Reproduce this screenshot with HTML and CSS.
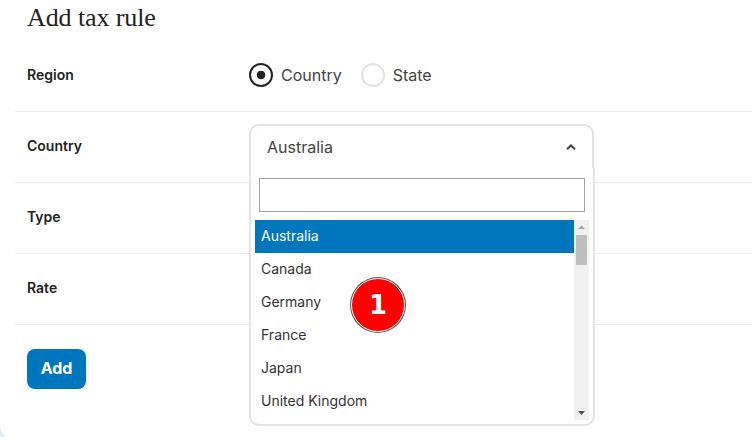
FILE: index.html
```html
<!DOCTYPE html>
<html lang="en">
<head>
<meta charset="utf-8">
<title>Add tax rule</title>
<link rel="stylesheet" href="styles.css">
</head>
<body>
<main class="card">
  <h1 class="title">Add tax rule</h1>
  <div class="row row-first">
    <div class="label">Region</div>
    <div class="control radios">
      <span class="radio-item"><span class="radio radio-on"></span>Country</span>
      <span class="radio-item"><span class="radio"></span>State</span>
    </div>
  </div>
  <div class="row">
    <div class="label">Country</div>
    <div class="control"></div>
  </div>
  <div class="row">
    <div class="label">Type</div>
    <div class="control"></div>
  </div>
  <div class="row">
    <div class="label">Rate</div>
    <div class="control"></div>
  </div>
  <div class="actions"><button class="add">Add</button></div>

  <div class="select">
    <div class="select-head">
      <span>Australia</span>
      <svg class="chev" width="10" height="6" viewBox="0 0 10 6"><path d="M1 5.2 L5 1.4 L9 5.2" fill="none" stroke="#444" stroke-width="2"/></svg>
    </div>
    <div class="dropdown">
      <div class="search"></div>
      <div class="list-wrap">
        <ul class="list">
          <li class="sel">Australia</li>
          <li>Canada</li>
          <li>Germany</li>
          <li>France</li>
          <li>Japan</li>
          <li>United Kingdom</li>
        </ul>
        <div class="scrollbar">
          <svg class="arrow" width="15" height="15" viewBox="0 0 15 15"><path d="M4 9 L7.5 5.5 L11 9 Z" fill="#a3a3a3"/></svg>
          <div class="thumb"></div>
          <div class="track"></div>
          <svg class="arrow" width="15" height="15" viewBox="0 0 15 15"><path d="M4 6 L11 6 L7.5 10 Z" fill="#505050"/></svg>
        </div>
      </div>
    </div>
  </div>
  <div class="badge">1</div>
</main>
</body>
</html>
```

FILE: styles.css
```css
* { box-sizing: border-box; }
html, body { margin: 0; padding: 0; }
body {
  width: 752px;
  height: 437px;
  overflow: hidden;
  background: #e4ecf4;
  font-family: "Inter", "Liberation Sans", sans-serif;
  color: #222;
}
.card {
  position: relative;
  height: 438px;
  background: #fff;
  border-bottom-left-radius: 12px;
  padding: 0 0 0 15px;
}
.title {
  margin: 0;
  padding-left: 12px;
  height: 40px;
  font-family: "Liberation Serif", serif;
  font-weight: 400;
  font-size: 26px;
  line-height: 36px;
  letter-spacing: -0.1px;
  color: #222;
}
.row {
  display: flex;
  height: 71px;
  border-bottom: 1px solid #e6ebf0;
}
.row-first { height: 72px; }
.label {
  width: 234px;
  padding: 26px 0 0 12px;
  font-size: 14px;
  line-height: 16px;
  font-weight: 600;
  color: #222;
}
.row-first .label { padding-top: 27px; }
.control { flex: 1; }
.radios {
  display: flex;
  gap: 19px;
  padding-top: 23px;
  height: 47px;
  font-size: 16px;
  color: #444;
}
.radio-item { display: flex; align-items: center; gap: 8px; }
.radio {
  width: 24px;
  height: 24px;
  border-radius: 50%;
  border: 2px solid #e3e3e3;
  background: #fff;
}
.radio-on {
  border-color: #222;
  background: radial-gradient(circle, #222 0 4px, #fff 4.6px);
}
.actions { padding: 24px 0 0 12px; }
.add {
  display: block;
  width: 59px;
  height: 40px;
  padding: 0 0 2px;
  border: 0;
  border-radius: 8px;
  background: #0076be;
  color: #fff;
  font-family: inherit;
  font-size: 16px;
  font-weight: 700;
}
.select {
  position: absolute;
  left: 249px;
  top: 124px;
  width: 346px;
  height: 302px;
  display: flex;
  flex-direction: column;
}
.select-head {
  display: flex;
  flex: none;
  justify-content: space-between;
  align-items: center;
  width: 345px;
  height: 44px;
  padding: 0 16px;
  background: #fff;
  border: 2px solid #e4e4e4;
  border-bottom: 0;
  border-radius: 10px 10px 0 0;
  font-size: 16px;
  color: #444;
}
.dropdown {
  flex: 1;
  padding: 10px 4px 0;
  background: #fff;
  border: 2px solid #e4e4e4;
  border-top: 0;
  border-radius: 0 0 10px 10px;
}
.search {
  margin: 0 4px 8px;
  height: 34px;
  border: 1px solid #a6a6a6;
}
.list-wrap { display: flex; height: 200px; }
.list {
  flex: 1;
  margin: 0;
  padding: 0;
  list-style: none;
  font-size: 14px;
  color: #333;
}
.list li {
  height: 33px;
  padding-left: 6px;
  line-height: 32px;
}
.list .sel { background: #0076be; color: #fff; }
.scrollbar {
  display: flex;
  flex-direction: column;
  width: 15px;
  background: #f0f0f0;
}
.arrow { display: block; flex: none; }
.thumb {
  flex: none;
  width: 11px;
  height: 30px;
  margin-left: 2px;
  background: #bebebe;
}
.track { flex: 1; }
.badge {
  position: absolute;
  left: 351px;
  top: 278px;
  width: 54px;
  height: 54px;
  border-radius: 50%;
  background: #f00;
  border: 1px solid #fff;
  box-shadow: 0 0 0 1px #555;
  color: #fff;
  font-family: "DejaVu Sans", sans-serif;
  font-weight: 700;
  font-size: 26px;
  line-height: 52px;
  text-align: center;
}
```
